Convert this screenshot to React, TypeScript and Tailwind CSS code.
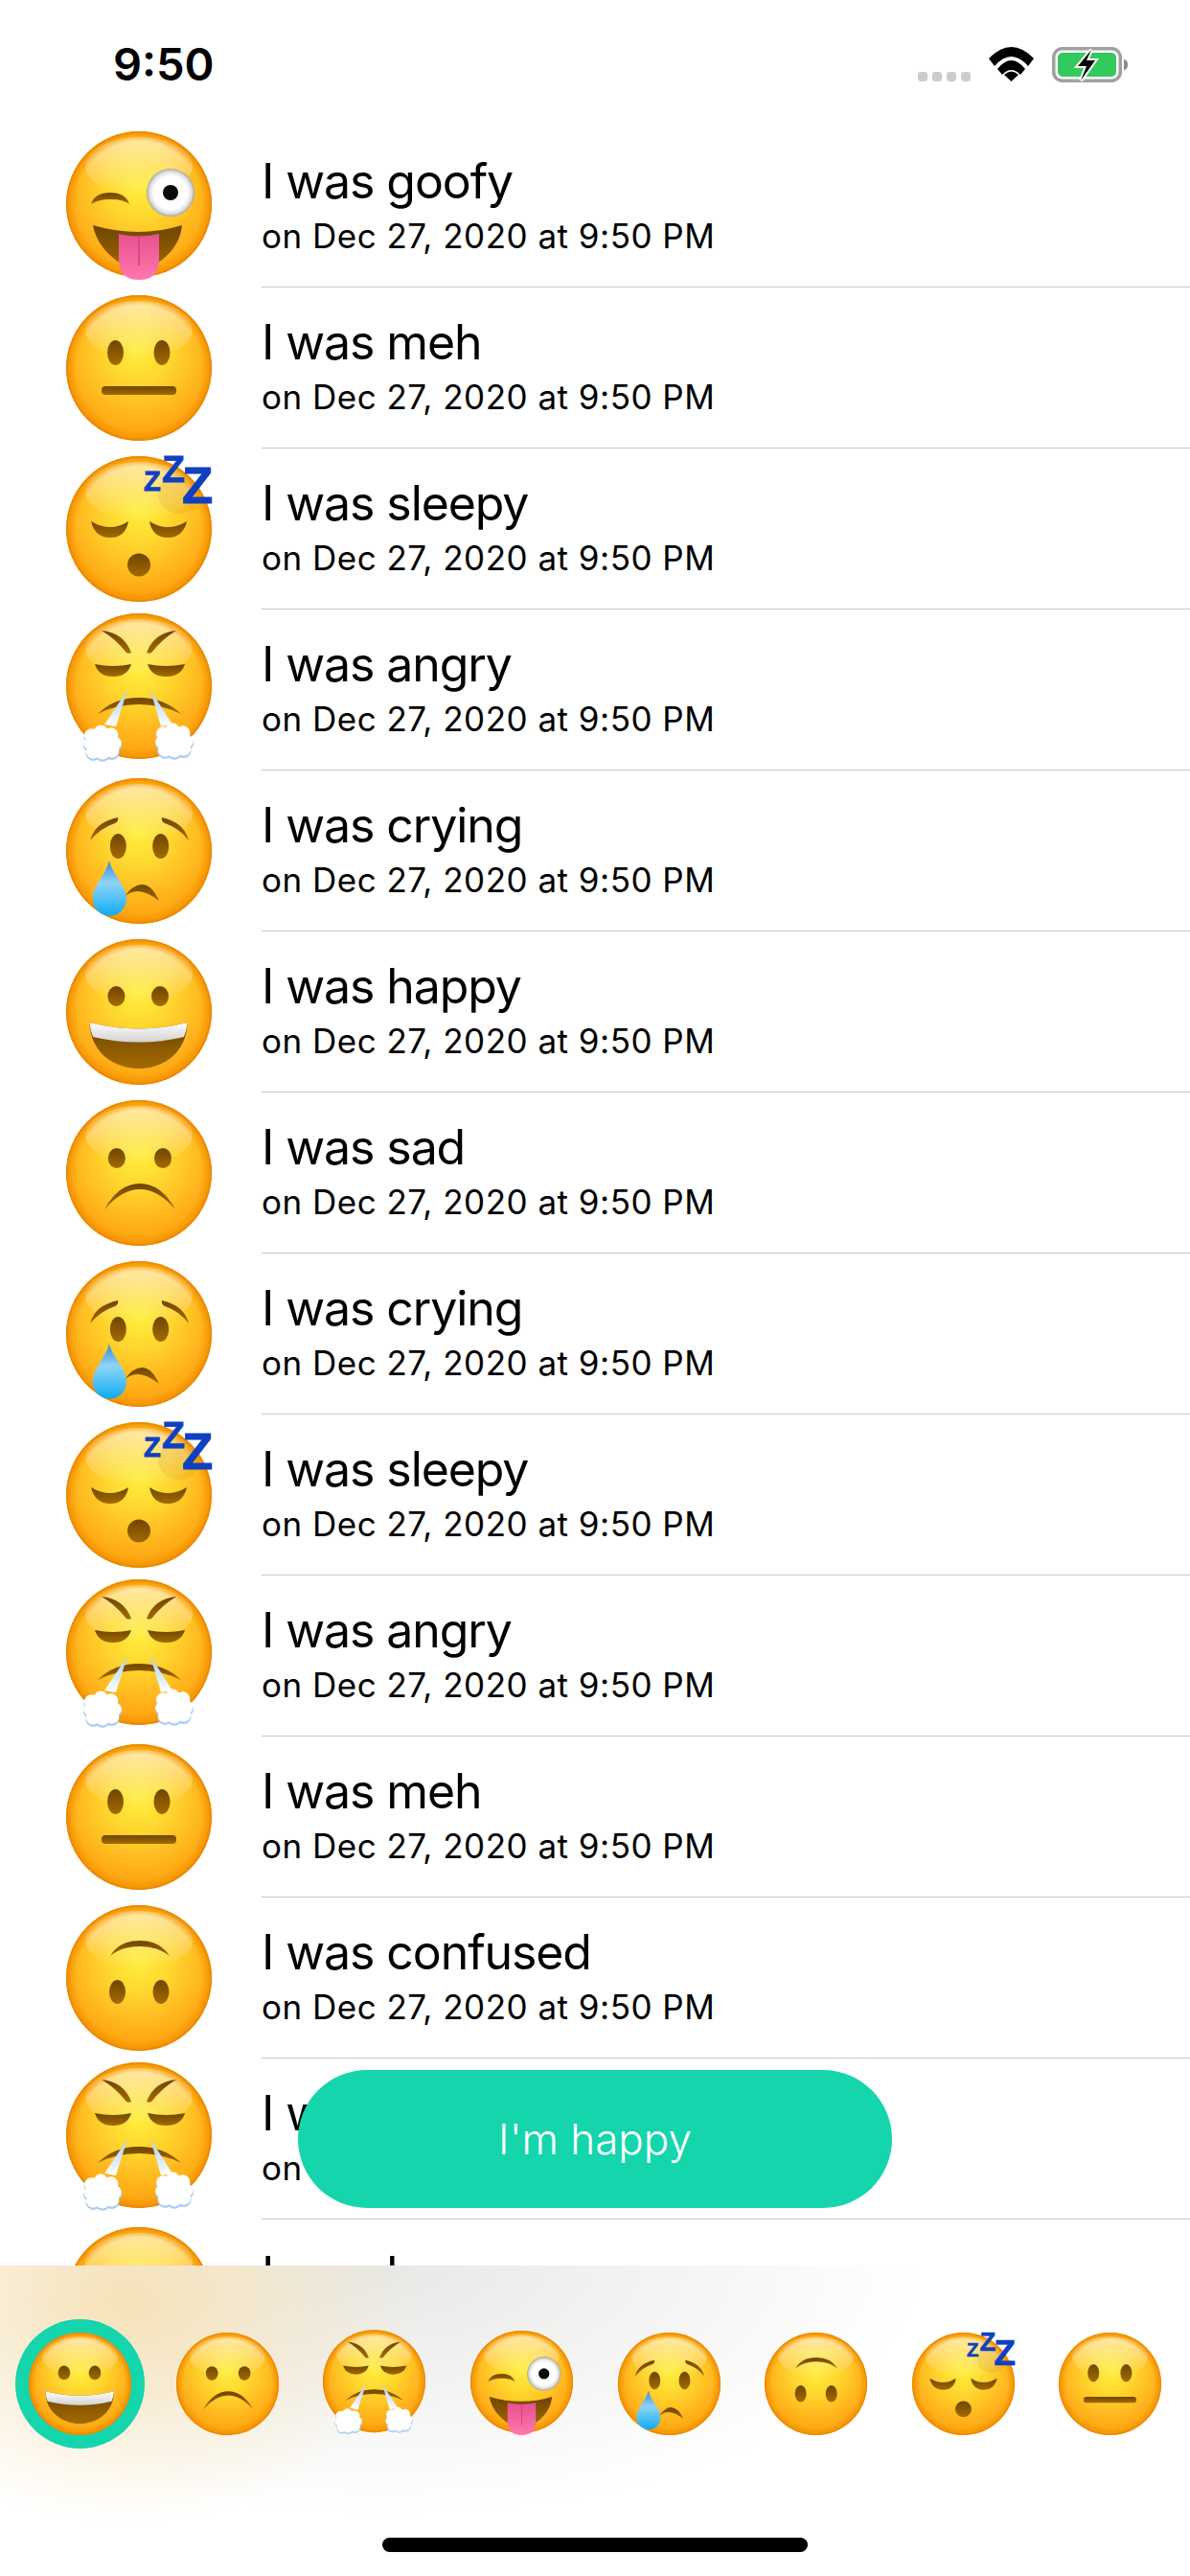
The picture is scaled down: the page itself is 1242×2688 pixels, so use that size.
import type { ReactNode } from "react";

type Mood = "goofy" | "meh" | "sleepy" | "angry" | "crying" | "happy" | "sad" | "confused";

const entries: { mood: Mood }[] = [
  { mood: "goofy" },
  { mood: "meh" },
  { mood: "sleepy" },
  { mood: "angry" },
  { mood: "crying" },
  { mood: "happy" },
  { mood: "sad" },
  { mood: "crying" },
  { mood: "sleepy" },
  { mood: "angry" },
  { mood: "meh" },
  { mood: "confused" },
  { mood: "angry" },
  { mood: "happy" },
];

const pickerMoods: Mood[] = ["happy", "sad", "angry", "goofy", "crying", "confused", "sleepy", "meh"];

const ink = "url(#emoji-ink)";

function Cloud({ x, y }: { x: number; y: number }) {
  const lobes = [
    [-13, -8, 9],
    [-2, -12, 9],
    [10, -9, 9],
    [15, 1, 8],
    [11, 10, 9],
    [0, 12, 9],
    [-11, 11, 9],
    [-16, 2, 7],
    [0, 0, 15],
  ];
  return (
    <g transform={`translate(${x} ${y}) scale(0.88)`}>
      {lobes.map(([cx, cy, r], i) => (
        <circle key={`s${i}`} cx={cx} cy={cy + 1.5} r={r} fill="#a9cdf2" />
      ))}
      {lobes.map(([cx, cy, r], i) => (
        <circle key={i} cx={cx} cy={cy - 0.5} r={r - 0.6} fill="#ffffff" />
      ))}
    </g>
  );
}

function Features({ mood }: { mood: Mood }): ReactNode {
  switch (mood) {
    case "goofy":
      return (
        <>
          <path d="M26 76Q30 64 46 64Q62 64 66 76Q60 71 46 71Q34 71 26 76Z" fill={ink} />
          <circle cx="109" cy="64" r="25" fill="url(#emoji-eye)" />
          <circle cx="109" cy="64" r="8" fill="#0a0a0a" />
          <path d="M28 98Q76 112 121 98Q118 130 76 148Q34 130 28 98Z" fill={ink} />
          <path d="M55 107Q76 112 97 107L97 134Q97 155 76 155Q55 155 55 134Z" fill="url(#emoji-tongue)" />
          <path d="M76 110L76 140" stroke="#c9457f" strokeWidth="1.5" />
        </>
      );
    case "meh":
      return (
        <>
          <ellipse cx="51.5" cy="60" rx="8.5" ry="13" fill={ink} />
          <ellipse cx="100" cy="60" rx="8.5" ry="13" fill={ink} />
          <rect x="37" y="95" width="78" height="9" rx="4" fill={ink} />
        </>
      );
    case "sleepy":
      return (
        <>
          <path d="M26 68Q46 80 65 68Q62 85 46 85Q30 85 26 68Z" fill={ink} />
          <path d="M87 68Q106 80 126 68Q122 85 106 85Q90 85 87 68Z" fill={ink} />
          <ellipse cx="76" cy="113.5" rx="12" ry="12" fill={ink} />
          <ellipse cx="118" cy="40" rx="22" ry="20" fill="#c98a10" opacity="0.16" />
          <g fill="#1040c0" stroke="#1040c0" strokeWidth="0.8" fontFamily='"Liberation Sans", sans-serif' fontWeight="700">
            <text x="81" y="36" fontSize="29">Z</text>
            <text x="100" y="26.5" fontSize="39">Z</text>
            <text x="121" y="49" fontSize="53">Z</text>
          </g>
        </>
      );
    case "angry":
      return (
        <>
          <path d="M37 18Q60 20 68 41Q64 43 62 40Q52 27 37 18Z" fill={ink} />
          <path d="M115 18Q92 20 84 41Q88 43 90 40Q100 27 115 18Z" fill={ink} />
          <path d="M30 53Q49 57 68 53Q64 66 49 66Q34 66 30 53Z" fill={ink} />
          <path d="M85 53Q104 57 124 53Q120 66 104 66Q89 66 85 53Z" fill={ink} />
          <path d="M33 105Q50 88 76 88Q102 88 120 105Q100 95 76 95Q52 95 33 105Z" fill={ink} />
          <path d="M64 80L52 118L40 116Z" fill="url(#emoji-steam)" />
          <path d="M88 80L111 116L99 118Z" fill="url(#emoji-steam)" />
          <Cloud x={38} y={135} />
          <Cloud x={113} y={133} />
        </>
      );
    case "crying":
      return (
        <>
          <path d="M25 65Q30 46 54 41Q55 45 51 47Q36 52 25 65Z" fill={ink} />
          <path d="M128 65Q123 46 100 41Q99 45 103 47Q118 52 128 65Z" fill={ink} />
          <ellipse cx="54.3" cy="71" rx="8.5" ry="13" fill={ink} />
          <ellipse cx="98.7" cy="71" rx="8.5" ry="13" fill={ink} />
          <path d="M60 125Q70 110 80 111Q90 112 97 128Q84 118 75 118Q66 118 60 125Z" fill={ink} />
          <path
            d="M45 86C48 100 63 112 63 126A17.6 17.6 0 1 1 27.7 126C27.7 112 42 100 45 86Z"
            fill="url(#emoji-drop)"
          />
        </>
      );
    case "happy":
      return (
        <>
          <ellipse cx="52.4" cy="59.6" rx="9" ry="10.5" fill={ink} />
          <ellipse cx="98" cy="59.6" rx="9" ry="10.5" fill={ink} />
          <path d="M24.6 87Q76 100 126.5 87C126 118 102 135 76 135C50 135 25 118 24.6 87Z" fill={ink} />
          <path d="M24.6 87Q76 100 126.5 87Q126 95 123 102Q76 113 28 102Q25 95 24.6 87Z" fill="url(#emoji-teeth)" />
        </>
      );
    case "sad":
      return (
        <>
          <ellipse cx="52.8" cy="60.5" rx="9" ry="10.5" fill={ink} />
          <ellipse cx="101" cy="60.5" rx="9" ry="10.5" fill={ink} />
          <path d="M40 114Q55 87 77 87Q99 87 114 114Q96 93 77 93Q58 93 40 114Z" fill={ink} />
        </>
      );
    case "confused":
      return (
        <>
          <path d="M46 53Q55 37 77 37Q98 37 108 53Q95 43 77 43Q58 43 46 53Z" fill={ink} />
          <ellipse cx="53.5" cy="90.5" rx="8.5" ry="12.5" fill={ink} />
          <ellipse cx="99" cy="90.5" rx="8.5" ry="12.5" fill={ink} />
        </>
      );
  }
}

// goofy and angry sit a few pixels high in their image because of the tongue and clouds
const faceY: Partial<Record<Mood, number>> = { goofy: 73, angry: 72 };

function Emoji({ mood, className }: { mood: Mood; className: string }) {
  const cy = faceY[mood] ?? 76;
  return (
    <svg viewBox="0 0 152 152" className={`shrink-0 overflow-visible ${className}`}>
      <g transform={`translate(0 ${cy - 76})`}>
        <circle cx="76" cy="76" r="76" fill="url(#emoji-face)" />
        <ellipse cx="76" cy="36" rx="56" ry="30" fill="url(#emoji-shine)" />
        <circle cx="76" cy="76" r="76" fill="url(#emoji-rim)" />
        <Features mood={mood} />
      </g>
    </svg>
  );
}

function SharedDefs() {
  return (
    <svg className="absolute h-0 w-0">
      <defs>
        <radialGradient id="emoji-face" cx="0.5" cy="0.38" r="0.66">
          <stop offset="0" stopColor="#ffee3e" />
          <stop offset="0.35" stopColor="#ffd52e" />
          <stop offset="0.7" stopColor="#ffb31c" />
          <stop offset="1" stopColor="#fb9c08" />
        </radialGradient>
        <radialGradient id="emoji-rim" cx="0.5" cy="0.5" r="0.5">
          <stop offset="0.86" stopColor="#f59300" stopOpacity="0" />
          <stop offset="0.96" stopColor="#f59300" stopOpacity="0.75" />
          <stop offset="1" stopColor="#e58000" />
        </radialGradient>
        <linearGradient id="emoji-shine" x1="0" y1="0" x2="0" y2="1">
          <stop offset="0" stopColor="#ffffff" stopOpacity="0.6" />
          <stop offset="1" stopColor="#ffffff" stopOpacity="0" />
        </linearGradient>
        <linearGradient id="emoji-ink" x1="0" y1="0" x2="0" y2="1">
          <stop offset="0" stopColor="#6f4500" />
          <stop offset="1" stopColor="#a36a00" />
        </linearGradient>
        <radialGradient id="emoji-eye" cx="0.5" cy="0.5" r="0.5">
          <stop offset="0.7" stopColor="#ffffff" />
          <stop offset="0.88" stopColor="#dedede" />
          <stop offset="1" stopColor="#a5a5a5" />
        </radialGradient>
        <linearGradient id="emoji-tongue" x1="0" y1="0" x2="0" y2="1">
          <stop offset="0" stopColor="#e84f90" />
          <stop offset="1" stopColor="#ff78ae" />
        </linearGradient>
        <linearGradient id="emoji-steam" x1="0" y1="0" x2="0" y2="1">
          <stop offset="0" stopColor="#a9cdf2" />
          <stop offset="1" stopColor="#ffffff" />
        </linearGradient>
        <linearGradient id="emoji-drop" x1="0" y1="0" x2="0" y2="1">
          <stop offset="0" stopColor="#2f86dc" />
          <stop offset="0.4" stopColor="#8fd3f6" />
          <stop offset="0.75" stopColor="#45bdf5" />
          <stop offset="1" stopColor="#0fa8f0" />
        </linearGradient>
        <linearGradient id="emoji-teeth" x1="0" y1="0" x2="0" y2="1">
          <stop offset="0" stopColor="#ffffff" />
          <stop offset="1" stopColor="#d2d2d2" />
        </linearGradient>
      </defs>
    </svg>
  );
}

function StatusBar() {
  return (
    <div className="flex h-[132px] justify-between pl-[118px] pr-[65px] pt-[49px]">
      <span className="font-['Inter',sans-serif] text-[47px] font-semibold leading-[36px] text-black">9:50</span>
      <div className="flex h-[37px] items-end gap-[19px]">
        {/* signal dots */}
        <div className="mb-[1px] flex gap-[5px]">
          {[0, 1, 2, 3].map((i) => (
            <div key={i} className="h-[10px] w-[10px] rounded-[3px] bg-[#cccccc]" />
          ))}
        </div>
        <svg viewBox="0 0 47 36" className="mb-[1px] h-[36px] w-[47px]">
          <path d="M0 12Q23.5 -12 47 12L41 20Q23.5 0 6 20Z" fill="#000" />
          <path d="M9 23Q23.5 5 38 23L33 29Q23.5 19 14 29Z" fill="#000" />
          <path d="M16 29Q23.5 22 31 29L23.5 36Z" fill="#000" />
        </svg>
        <svg viewBox="0 0 79 37" className="h-[37px] w-[79px]">
          <rect x="1.75" y="1.75" width="69.5" height="33.5" rx="9" fill="none" stroke="#a0a0a0" strokeWidth="3.5" />
          <path d="M75 12.5Q79 14 79 18.5Q79 23 75 24.5Z" fill="#8a8a8a" />
          <rect x="6" y="6" width="61" height="25" rx="5" fill="#34c95c" />
          <path d="M41 3L27 20L36 20L30 35L45 14L36 14Z" fill="#000" stroke="#fff" strokeWidth="4" paintOrder="stroke" />
        </svg>
      </div>
    </div>
  );
}

function EntryRow({ mood }: { mood: Mood }) {
  return (
    <div className="flex h-[168px] items-center">
      <Emoji mood={mood} className="ml-[69px] mr-[52px] h-[152px] w-[152px]" />
      <div className="flex h-full flex-1 flex-col justify-center border-b border-[#c8c7cc] pt-[4px] font-['Inter',sans-serif] text-black">
        <p className="text-[50px] font-normal leading-[52px] tracking-[-1.1px]">I was {mood}</p>
        <p className="mt-[5px] text-[35px] font-normal leading-[52px] tracking-[0.5px]">on Dec 27, 2020 at 9:50 PM</p>
      </div>
    </div>
  );
}

function MoodPicker() {
  return (
    <div className="absolute inset-x-0 bottom-0 h-[324px] bg-white bg-[radial-gradient(ellipse_300px_230px_at_130px_40px,rgba(248,222,170,0.8),rgba(248,222,170,0)),radial-gradient(ellipse_560px_260px_at_400px_0px,#e8e8e6,rgba(232,232,230,0))] pl-[7px] pt-[56px]">
      <div className="flex">
        {pickerMoods.map((mood, i) => (
          <div key={i} className="flex h-[135px] w-[153.6px] items-center justify-center">
            {i === 0 ? (
              <div className="flex h-[135px] w-[135px] items-center justify-center rounded-full bg-[#15d5ac]">
                <Emoji mood={mood} className="h-[107px] w-[107px]" />
              </div>
            ) : (
              <Emoji mood={mood} className="h-[107px] w-[107px]" />
            )}
          </div>
        ))}
      </div>
      <div className="absolute bottom-[25px] left-1/2 h-[15px] w-[444px] -translate-x-1/2 rounded-full bg-black" />
    </div>
  );
}

export default function App() {
  return (
    <div className="relative h-[2688px] w-[1242px] overflow-hidden bg-white">
      <SharedDefs />
      <StatusBar />
      <div>
        {entries.map((entry, i) => (
          <EntryRow key={i} mood={entry.mood} />
        ))}
      </div>
      <button className="absolute bottom-[384px] left-1/2 flex h-[144px] w-[620px] -translate-x-1/2 items-center justify-center rounded-full bg-[#15d5ac] font-['Inter',sans-serif] text-[44px] font-light text-white">
        I'm happy
      </button>
      <MoodPicker />
    </div>
  );
}
